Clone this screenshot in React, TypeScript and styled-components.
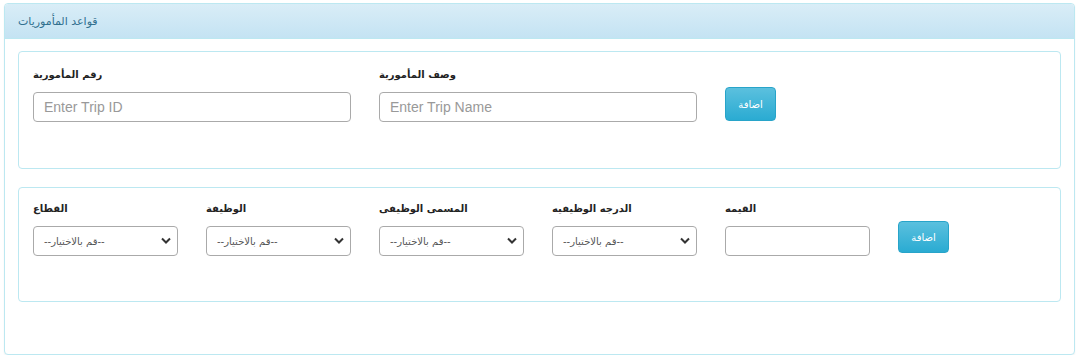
import React from 'react';
import styled, { createGlobalStyle } from 'styled-components';

const GlobalStyle = createGlobalStyle`
  body {
    margin: 0;
    background: #ffffff;
    font-family: "Liberation Sans", "DejaVu Sans", Arial, sans-serif;
  }
`;

const Panel = styled.div`
  margin: 3px 4px 0 4px;
  width: 1071px;
  box-sizing: border-box;
  border: 1px solid #bce8f1;
  border-radius: 4px;
  background: #fff;
  box-shadow: 0 1px 2px rgba(0, 0, 0, 0.05);
`;

const PanelHeading = styled.div`
  height: 35px;
  box-sizing: border-box;
  padding: 0 13px;
  display: flex;
  align-items: center;
  background: linear-gradient(to bottom, #d9edf7 0%, #c4e3f3 100%);
  border-bottom: 1px solid #bce8f1;
  border-radius: 3px 3px 0 0;
  color: #31708f;
  font-family: "DejaVu Sans", sans-serif;
  font-size: 11px;
`;

const PanelBody = styled.div`
  padding: 12px 13px 52px 13px;
  display: flex;
  flex-direction: column;
  gap: 18px;
`;

const Well = styled.div<{ $top: number; $bottom: number }>`
  border: 1px solid #bce8f1;
  border-radius: 4px;
  padding: ${(p) => p.$top}px 14px ${(p) => p.$bottom}px 14px;
  display: grid;
  grid-template-columns: repeat(6, 145px);
  column-gap: 28px;
`;

const Field = styled.div<{ $span?: number }>`
  grid-column: span ${(p) => p.$span ?? 1};
  display: flex;
  flex-direction: column;
`;

const Label = styled.label`
  height: 20px;
  line-height: 16px;
  margin-bottom: 5px;
  font-family: "DejaVu Sans", sans-serif;
  font-weight: bold;
  font-size: 10px;
  color: #222;
`;

const TextInput = styled.input`
  height: 30px;
  box-sizing: border-box;
  border: 1px solid #aaa;
  border-radius: 4px;
  padding: 0 10px;
  font-family: "Liberation Sans", Arial, sans-serif;
  font-size: 14px;
  color: #555;
  outline: none;

  &::placeholder {
    color: #999;
  }
`;

const SelectWrap = styled.div`
  position: relative;
  height: 30px;
`;

const Select = styled.select`
  appearance: none;
  width: 100%;
  height: 30px;
  box-sizing: border-box;
  border: 1px solid #aaa;
  border-radius: 4px;
  padding: 0 10px;
  background: #fff;
  font-family: "DejaVu Sans", sans-serif;
  font-size: 10px;
  color: #555;
  outline: none;
`;

const Chevron = styled.svg`
  position: absolute;
  right: 7px;
  top: 11px;
  width: 10px;
  height: 8px;
  pointer-events: none;
`;

const AddButton = styled.button<{ $height: number }>`
  margin-top: 20px;
  width: 51px;
  height: ${(p) => p.$height}px;
  border: 1px solid #28a4c9;
  border-radius: 4px;
  background: linear-gradient(to bottom, #5bc0de 0%, #2aabd2 100%);
  color: #fff;
  font-family: "DejaVu Sans", sans-serif;
  font-size: 10px;
  padding: 0;
  cursor: pointer;
`;

function Dropdown() {
  return (
    <SelectWrap>
      <Select defaultValue="">
        <option value="">--قم بالاختيار--</option>
      </Select>
      <Chevron viewBox="0 0 10 8">
        <path d="M1 1.5 L5 5.5 L9 1.5" fill="none" stroke="#333" strokeWidth="2" />
      </Chevron>
    </SelectWrap>
  );
}

const selectFields = ['القطاع', 'الوظيفة', 'المسمى الوظيفى', 'الدرجه الوظيفيه'];

export default function App() {
  return (
    <>
      <GlobalStyle />
      <Panel>
        <PanelHeading>قواعد المأموريات</PanelHeading>
        <PanelBody>
          <Well $top={15} $bottom={46}>
            <Field $span={2}>
              <Label>رقم المأمورية</Label>
              <TextInput placeholder="Enter Trip ID" />
            </Field>
            <Field $span={2}>
              <Label>وصف المأمورية</Label>
              <TextInput placeholder="Enter Trip Name" />
            </Field>
            <Field>
              <AddButton $height={34}>اضافة</AddButton>
            </Field>
          </Well>
          <Well $top={13} $bottom={45}>
            {selectFields.map((name) => (
              <Field key={name}>
                <Label>{name}</Label>
                <Dropdown />
              </Field>
            ))}
            <Field>
              <Label>القيمه</Label>
              <TextInput />
            </Field>
            <Field>
              <AddButton $height={32}>اضافة</AddButton>
            </Field>
          </Well>
        </PanelBody>
      </Panel>
    </>
  );
}
